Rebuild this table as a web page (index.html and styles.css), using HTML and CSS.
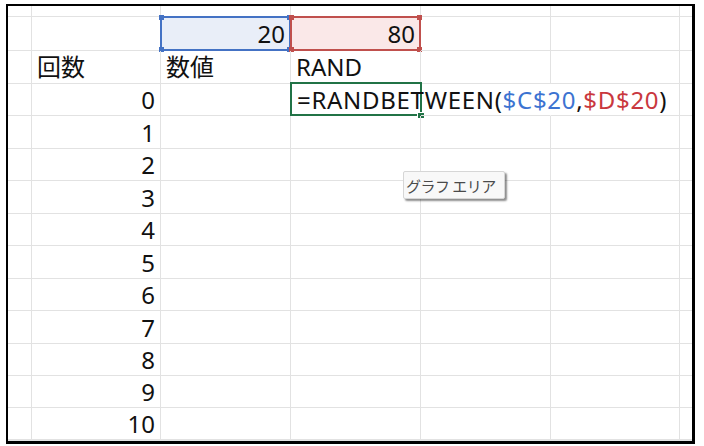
FILE: index.html
```html
<!DOCTYPE html>
<html lang="ja">
<head>
<meta charset="utf-8">
<link rel="stylesheet" href="styles.css">
</head>
<body>
<div class="frame">
  <div class="sheet">
    <!-- row 0 (partial) -->
    <div class="c"></div><div class="c"></div><div class="c"></div><div class="c"></div><div class="c"></div><div class="c"></div><div class="c last"></div>
    <!-- row 1 -->
    <div class="c"></div><div class="c"></div>
    <div class="c num ref ref-blue"><span class="h tl"></span><span class="h tr"></span><span class="h bl"></span><span class="h br"></span>20</div>
    <div class="c num ref ref-red"><span class="h tl"></span><span class="h tr"></span><span class="h bl"></span><span class="h br"></span>80</div>
    <div class="c"></div><div class="c"></div><div class="c last"></div>
    <!-- row 2 -->
    <div class="c"></div><div class="c txt">回数</div><div class="c txt">数値</div><div class="c txt">RAND</div><div class="c"></div><div class="c"></div><div class="c last"></div>
    <!-- row 3 -->
    <div class="c"></div><div class="c num">0</div><div class="c"></div>
    <div class="c txt active"><span class="formula">=RANDBETWEEN(<span class="blue">$C$20</span>,<span class="red">$D$20</span>)</span><span class="fill"></span></div>
    <div class="c noright"></div><div class="c"></div><div class="c last"></div>
    <!-- rows 4.. -->
    <div class="c"></div><div class="c num">1</div><div class="c"></div><div class="c"></div><div class="c"></div><div class="c"></div><div class="c last"></div>
    <div class="c"></div><div class="c num">2</div><div class="c"></div><div class="c"></div><div class="c"></div><div class="c"></div><div class="c last"></div>
    <div class="c"></div><div class="c num">3</div><div class="c"></div><div class="c"></div><div class="c"></div><div class="c"></div><div class="c last"></div>
    <div class="c"></div><div class="c num">4</div><div class="c"></div><div class="c"></div><div class="c"></div><div class="c"></div><div class="c last"></div>
    <div class="c"></div><div class="c num">5</div><div class="c"></div><div class="c"></div><div class="c"></div><div class="c"></div><div class="c last"></div>
    <div class="c"></div><div class="c num">6</div><div class="c"></div><div class="c"></div><div class="c"></div><div class="c"></div><div class="c last"></div>
    <div class="c"></div><div class="c num">7</div><div class="c"></div><div class="c"></div><div class="c"></div><div class="c"></div><div class="c last"></div>
    <div class="c"></div><div class="c num">8</div><div class="c"></div><div class="c"></div><div class="c"></div><div class="c"></div><div class="c last"></div>
    <div class="c"></div><div class="c num">9</div><div class="c"></div><div class="c"></div><div class="c"></div><div class="c"></div><div class="c last"></div>
    <div class="c"></div><div class="c num">10</div><div class="c"></div><div class="c"></div><div class="c"></div><div class="c"></div><div class="c last"></div>
    <div class="c"></div><div class="c"></div><div class="c"></div><div class="c"></div><div class="c"></div><div class="c"></div><div class="c last"></div>
  </div>
  <div class="tooltip">グラフ エリア</div>
</div>
</body>
</html>
```

FILE: styles.css
```css
* { box-sizing: border-box; }
html, body { margin: 0; padding: 0; background: #ffffff; }
body {
  width: 704px;
  height: 446px;
  padding: 4px 9px 2px 6px;
  font-family: "Noto Sans", "Noto Sans CJK JP", sans-serif;
  color: #111111;
}
.frame {
  position: relative;
  width: 689px;
  height: 440px;
  border-style: solid;
  border-color: #000000;
  border-width: 2px 3px 3px 2px;
  overflow: hidden;
}
.sheet {
  display: grid;
  grid-template-columns: 24px 129px 130px 130px 130px 129px 1fr;
  grid-template-rows: 11px 34px 33px 32px 33px 32px 33px 32px 33px 32px 33px 32px 32px 32px 1fr;
  height: 100%;
}
.c {
  position: relative;
  border-right: 1px solid #e2e2e2;
  border-bottom: 1px solid #e2e2e2;
  display: flex;
  align-items: center;
  font-size: 24px;
  line-height: 1;
  white-space: nowrap;
}
.c.last { border-right: none; }
.c.noright { border-right-color: transparent; }
.num { justify-content: flex-end; padding-right: 5px; padding-top: 1px; }
.txt { padding-left: 5px; }
.ref {
  margin: -1px 0 0 -1px;
  border-width: 2px;
  border-style: solid;
  padding-right: 4px;
}
.ref-blue { background: #e9eef8; border-color: #4472c4; }
.ref-red { background: #fae8e8; border-color: #c0504d; }
.h {
  position: absolute;
  width: 5px;
  height: 5px;
}
.ref-blue .h { background: #4472c4; }
.ref-red .h { background: #c0504d; }
.h.tl { left: -3px; top: -3px; }
.h.tr { right: -3px; top: -3px; }
.h.bl { left: -3px; bottom: -3px; }
.h.br { right: -3px; bottom: -3px; }
.active {
  margin: -2px -1px 0 -1px;
  border: 2px solid #217346;
  overflow: visible;
  padding-left: 5px;
  padding-top: 2px;
}
.formula { position: relative; z-index: 2; letter-spacing: 0.7px; }
.blue { color: #3c73d1; }
.red { color: #c9383e; }
.fill {
  position: absolute;
  right: -4px;
  bottom: -4px;
  width: 7px;
  height: 6px;
  background: #217346;
  border: 1px solid #ffffff;
  border-right: none;
  border-bottom: none;
}
.tooltip {
  position: absolute;
  left: 395px;
  top: 165px;
  width: 102px;
  height: 28px;
  background: #f8f8f8;
  border: 1px solid #d6d6d6;
  border-radius: 2px;
  box-shadow: 2px 2px 2px rgba(0,0,0,0.45);
  font-family: "Noto Sans CJK JP", sans-serif;
  font-size: 15px;
  color: #4a4a4a;
  display: flex;
  align-items: center;
  padding-left: 2px;
  letter-spacing: -0.5px;
}
```
